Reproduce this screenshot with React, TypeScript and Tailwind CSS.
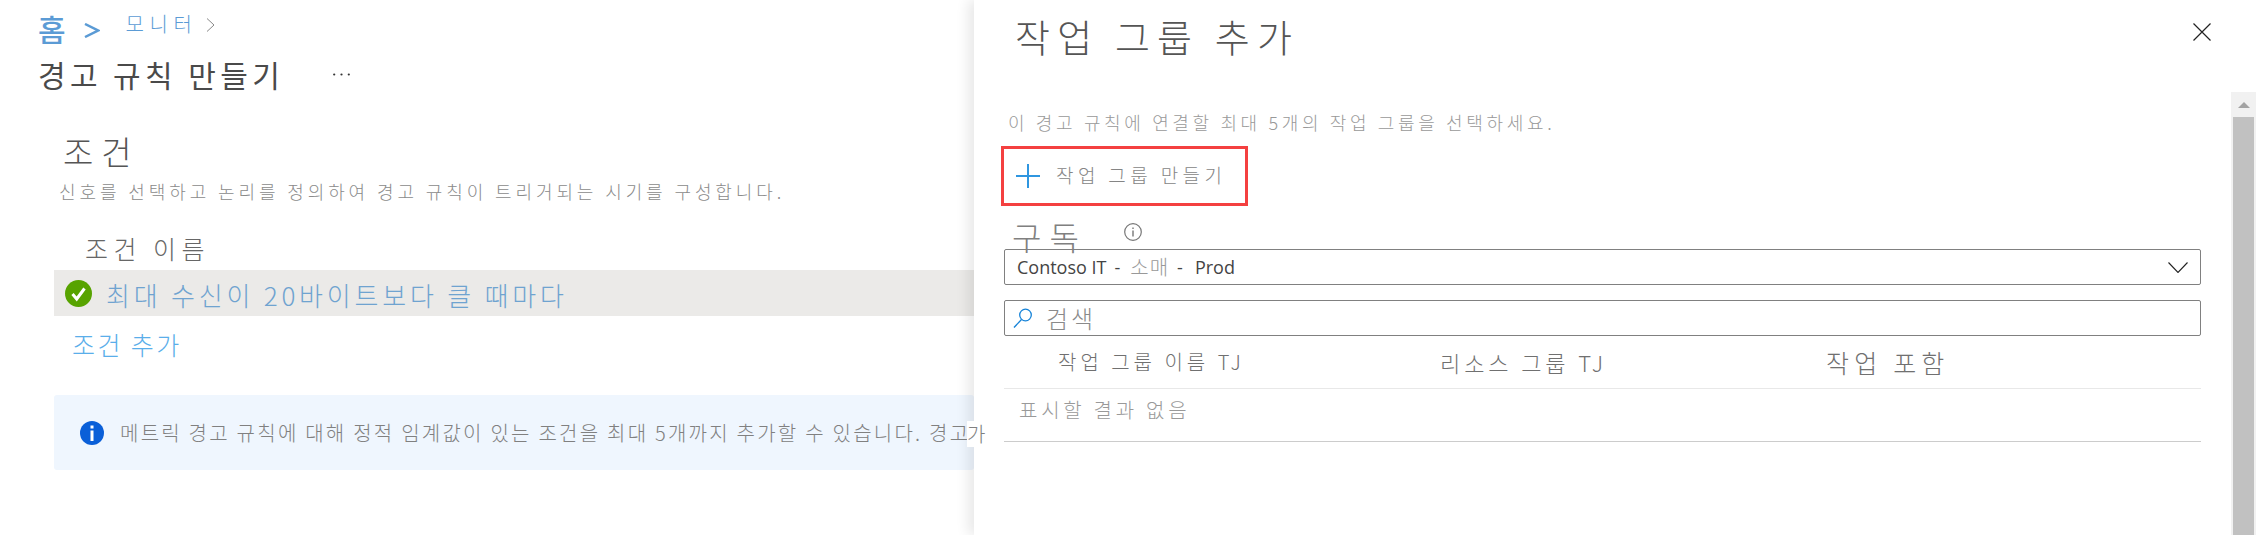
const FONT = '"Noto Sans CJK KR", "Noto Sans", sans-serif';

function CheckBadge() {
  return (
    <svg width="27" height="27" viewBox="0 0 27 27" className="shrink-0">
      <circle cx="13.5" cy="13.5" r="13.5" fill="#57a300" />
      <path d="M7.5 14l4.2 5 7.8-10.5" fill="none" stroke="#fff" strokeWidth="3" />
    </svg>
  );
}

function InfoBadge() {
  return (
    <svg width="24" height="24" viewBox="0 0 24 24" className="shrink-0">
      <circle cx="12" cy="12" r="12" fill="#0a5fd8" />
      <rect x="10.5" y="4.5" width="3" height="3" fill="#fff" />
      <rect x="10.5" y="9.5" width="3" height="10.5" fill="#fff" />
    </svg>
  );
}

function LeftPane() {
  return (
    <div className="w-[974px] shrink-0 pt-[14px] pl-[38px]">
      <div className="flex items-start h-[29px]">
        <a className="text-[30px] leading-[29px] font-medium text-[#5b9bd5]">홈</a>
        <svg width="16" height="15" viewBox="0 0 16 15" className="ml-[18px] mt-[9px]">
          <path d="M1 1l13 6.5-13 6.5" fill="none" stroke="#5b9bd5" strokeWidth="2.5" />
        </svg>
        <a className="ml-[26px] text-[20px] leading-[20px] font-light tracking-[5.5px] text-[#5b9bd5]">모니터</a>
        <svg width="9" height="14" viewBox="0 0 9 14" className="ml-[9px] mt-[4px]">
          <path d="M1 0.5l7 6.5-7 6.5" fill="none" stroke="#888" strokeWidth="1" />
        </svg>
      </div>
      <div className="flex items-center h-[30px] mt-[16px]">
        <h1 className="text-[30px] leading-[30px] tracking-[4.4px] text-[#4a4a4a] w-[295px] whitespace-nowrap">경고 규칙 만들기</h1>
        <svg width="17" height="3" viewBox="0 0 17 3">
          <circle cx="1.2" cy="1.5" r="1.1" fill="#333" />
          <circle cx="8.5" cy="1.5" r="1.1" fill="#333" />
          <circle cx="15.8" cy="1.5" r="1.1" fill="#333" />
        </svg>
      </div>
      <div className="pl-[25px] mt-[45px] text-[33px] leading-[34px] font-light tracking-[8px] text-[#555]">조건</div>
      <p className="pl-[21px] mt-[12px] text-[18px] leading-[22px] font-light tracking-[3.9px] text-[#8a8a8a] whitespace-nowrap">
        신호를 선택하고 논리를 정의하여 경고 규칙이 트리거되는 시기를 구성합니다.
      </p>
      <div className="pl-[47px] mt-[32px] text-[25px] leading-[28px] font-light tracking-[5.5px] text-[#666]">조건 이름</div>
      <div className="ml-[16px] mt-[8px] h-[46px] bg-[#ebeae8] flex items-center pl-[11px] gap-[14px]">
        <CheckBadge />
        <span className="mt-[4px] text-[26px] leading-[30px] font-light tracking-[3.8px] text-[#6fa3d0] whitespace-nowrap">최대 수신이 20바이트보다 클 때마다</span>
      </div>
      <a className="block pl-[34px] mt-[14px] text-[25px] leading-[28px] font-light tracking-[2.4px] text-[#5aaeea]">조건 추가</a>
      <div className="ml-[16px] mt-[37px] h-[75px] rounded-[3px] bg-[#eff6fe] flex items-center pl-[26px] gap-[16px] overflow-hidden">
        <InfoBadge />
        <span className="text-[20px] leading-[24px] font-light tracking-[2.25px] text-[#808080] whitespace-nowrap">
          메트릭 경고 규칙에 대해 정적 임계값이 있는 조건을 최대 5개까지 추가할 수 있습니다. 경고
        </span>
      </div>
    </div>
  );
}

function ActionPanel() {
  return (
    <div className="relative flex-1 bg-white shadow-[-6px_0_12px_rgba(0,0,0,0.09)] pl-[30px] pt-[11px]">
      <span className="absolute left-[-7px] top-[421px] bg-white text-[20px] leading-[26px] font-light text-[#808080]">가</span>

      <div className="flex items-start w-[1207px]">
        <h2 className="pl-[11px] text-[38px] leading-[50px] font-light tracking-[7.2px] text-[#555] whitespace-nowrap">작업 그룹 추가</h2>
        <svg width="18" height="18" viewBox="0 0 18 18" className="ml-auto mt-[12px]">
          <path d="M0.5 0.5l17 17M17.5 0.5l-17 17" stroke="#222" strokeWidth="1.2" />
        </svg>
      </div>

      <p className="pl-[4px] mt-[49px] text-[18px] leading-[24px] font-light tracking-[3.65px] text-[#999] whitespace-nowrap">
        이 경고 규칙에 연결할 최대 5개의 작업 그룹을 선택하세요.
      </p>

      <button className="ml-[-3px] mt-[12px] w-[247px] h-[60px] border-[3px] border-[#f44040] flex items-start pl-[12px] pt-[15px] gap-[16px]">
        <svg width="24" height="24" viewBox="0 0 24 24" className="shrink-0">
          <path d="M12 0v24M0 12h24" stroke="#2f96e0" strokeWidth="2" />
        </svg>
        <span className="text-[19px] leading-[22px] font-light tracking-[4.4px] text-[#858585] whitespace-nowrap">작업 그룹 만들기</span>
      </button>

      <div className="relative h-[43px]">
        <span className="absolute left-[8px] top-[13px] text-[32px] leading-[34px] font-light tracking-[8px] text-[#808080]">구독</span>
        <svg width="18" height="18" viewBox="0 0 18 18" className="absolute left-[120px] top-[17px]">
          <circle cx="9" cy="9" r="8.3" fill="none" stroke="#777" strokeWidth="1.2" />
          <path d="M9 7.5v6M9 4.5v1.6" stroke="#777" strokeWidth="1.4" />
        </svg>
      </div>

      <div className="relative w-[1197px] h-[36px] border border-[#808080] rounded-[2px] flex items-center pl-[12px] justify-between pr-[12px]">
        <span className="flex items-center text-[18px] leading-[22px] text-[#444] whitespace-nowrap" style={{ fontFamily: '"Open Sans", "Noto Sans CJK KR", sans-serif' }}>
          Contoso IT
          <span className="ml-[8px]">-</span>
          <span className="ml-[10px] text-[20px] font-light tracking-[1px] text-[#999]" style={{ fontFamily: FONT }}>소매</span>
          <span className="ml-[8px]">-</span>
          <span className="ml-[12px]">Prod</span>
        </span>
        <svg width="20" height="11" viewBox="0 0 20 11">
          <path d="M0.5 0.5l9.5 10 9.5-10" fill="none" stroke="#222" strokeWidth="1.1" />
        </svg>
      </div>

      <div className="w-[1197px] h-[36px] mt-[15px] border border-[#808080] rounded-[2px] flex items-center pl-[8px] gap-[13px]">
        <svg width="20" height="20" viewBox="0 0 20 20" className="shrink-0">
          <circle cx="12.5" cy="7" r="5.8" fill="none" stroke="#1683d8" strokeWidth="1.3" />
          <path d="M8.5 11.5L1 19.5" stroke="#1683d8" strokeWidth="1.3" />
        </svg>
        <span className="text-[24px] leading-[30px] font-light tracking-[3px] text-[#8a8a8a]">검색</span>
      </div>

      <div className="w-[1197px] h-[53px] flex items-center border-b border-[#e8e8e8] text-[#707070] font-light whitespace-nowrap">
        <span className="w-[436px] pl-[54px] text-[20px] leading-[26px] tracking-[4px]">작업 그룹 이름 TJ</span>
        <span className="w-[386px] text-[22px] leading-[28px] tracking-[3.9px]">리소스 그룹 TJ</span>
        <span className="text-[25px] leading-[30px] tracking-[5.2px]">작업 포함</span>
      </div>

      <div className="w-[1197px] h-[53px] border-b border-[#cccccc] pl-[15px] pt-[9px] text-[20px] leading-[24px] font-light tracking-[3.75px] text-[#999]">
        표시할 결과 없음
      </div>

      <div className="absolute right-0 top-[92px] bottom-0 w-[25px] bg-[#f1f1f1] flex flex-col items-center">
        <div className="h-[25px] flex items-center justify-center">
          <svg width="12" height="6" viewBox="0 0 12 6"><path d="M6 0l6 6H0z" fill="#a3a3a3" /></svg>
        </div>
        <div className="flex-1 w-[21px] bg-[#c1c1c1]" />
      </div>
    </div>
  );
}

export default function App() {
  return (
    <div className="w-[2256px] h-[535px] flex bg-white overflow-hidden" style={{ fontFamily: FONT }}>
      <LeftPane />
      <ActionPanel />
    </div>
  );
}
